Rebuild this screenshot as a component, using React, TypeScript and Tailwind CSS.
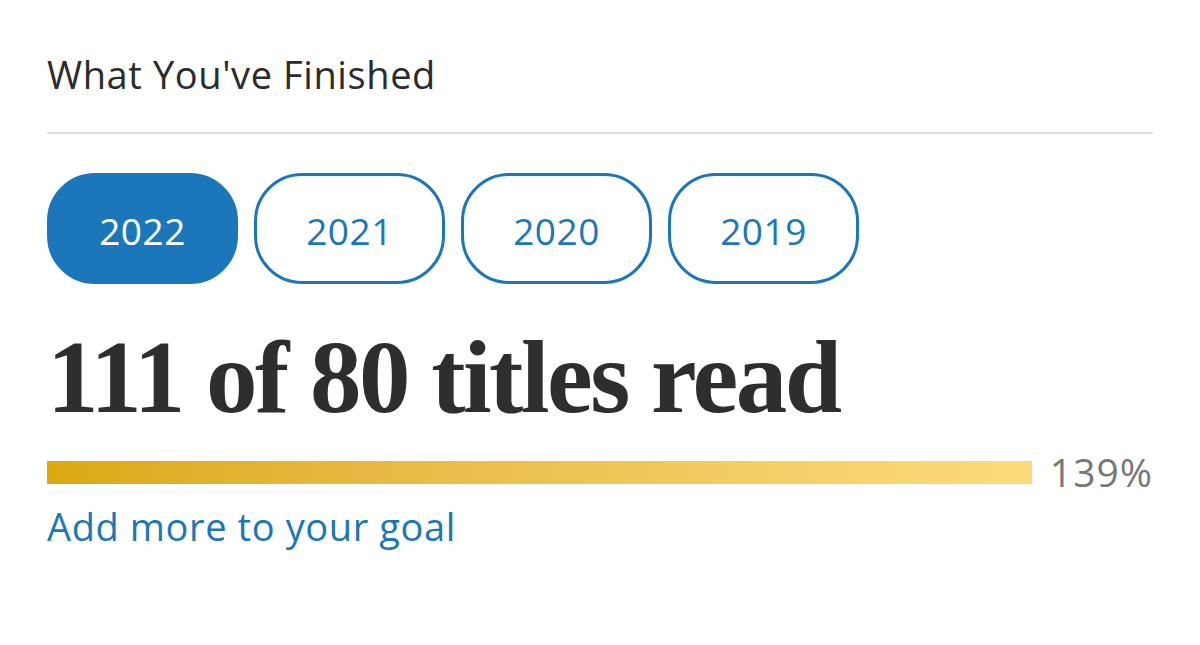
const years = ["2022", "2021", "2020", "2019"]

export default function App() {
  const active = "2022"
  const pct = 139

  return (
    <div className="h-[645px] w-[1200px] bg-white px-[47px] font-['Open_Sans',sans-serif] text-[#333]">
      <h2 className="pt-[50px] text-[38px] leading-[48px] tracking-[0.6px] text-[#2b2b2b]">What You&apos;ve Finished</h2>
      <div className="mt-[34px] h-[2px] bg-[#dddddd]" />
      <div className="mt-[39px] flex gap-[16px]">
        {years.map((y) => (
          <button
            key={y}
            className={
              y === active
                ? "h-[111px] w-[191px] rounded-[48px] border-[3px] border-[#1b77b9] bg-[#1b77b9] pt-[4px] text-[37px] tracking-[0.5px] text-white"
                : "h-[111px] w-[191px] rounded-[48px] border-[3px] border-[#1b77b9] bg-white pt-[4px] text-[37px] tracking-[0.5px] text-[#1b77b9]"
            }
          >
            {y}
          </button>
        ))}
      </div>
      <h1 className="mt-[36px] font-['Liberation_Serif',serif] text-[103px] font-bold leading-[114px] tracking-[-2.5px] text-[#2e2e2e]">
        111 of 80 titles read
      </h1>
      <div className="mt-[18px] flex items-center gap-[14px]">
        <div className="h-[23px] flex-1 bg-gradient-to-r from-[#dca90f] to-[#fddb7c]" />
        <span className="w-[107px] text-right text-[39px] leading-[40px] tracking-[1px] text-[#777]">{pct}%</span>
      </div>
      <a href="#" className="mt-[9px] block text-[38px] leading-[50px] tracking-[0.6px] text-[#1b77b9]">
        Add more to your goal
      </a>
    </div>
  )
}
